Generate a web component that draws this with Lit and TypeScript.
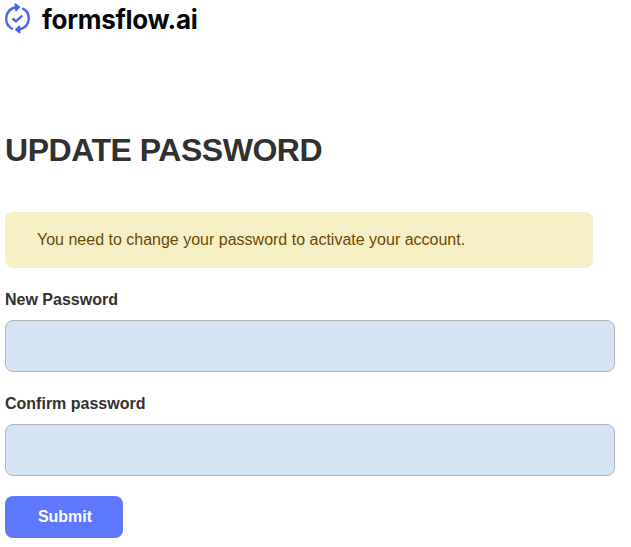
import { LitElement, html, css } from "lit";
import { customElement } from "lit/decorators.js";

@customElement("app-root")
export class AppRoot extends LitElement {
  static styles = css`
    :host {
      display: block;
      box-sizing: border-box;
      height: 547px;
      padding: 0 16px 0 5px;
      overflow: hidden;
      background: #fff;
      color: #313132;
      font: 16px/24px "Liberation Sans", Arial, sans-serif;
    }
    .brand {
      display: flex;
      height: 38px;
    }
    .mark {
      flex: none;
      width: 26px;
      height: 38px;
    }
    .name {
      margin-left: 11px;
      color: #050708;
      font: 700 26px/40px Inter, sans-serif;
      letter-spacing: -0.27px;
      white-space: nowrap;
    }
    h1 {
      margin: 92px 0 0;
      font-size: 32px;
      line-height: 40px;
      font-weight: 700;
      letter-spacing: -0.47px;
      white-space: nowrap;
    }
    .alert {
      box-sizing: border-box;
      width: 588px;
      height: 56px;
      margin-top: 42px;
      padding: 16px 32px;
      border-radius: 8px;
      background: #f7f0c6;
      color: #6c4a00;
    }
    form {
      margin: 0;
      padding-top: 20px;
    }
    label {
      display: block;
      height: 24px;
      font-weight: 700;
    }
    input {
      display: block;
      box-sizing: border-box;
      width: 610px;
      height: 52px;
      margin: 8px 0 20px;
      padding: 0 12px;
      border: 1px solid #b1b3b5;
      border-radius: 8px;
      outline: none;
      background: #d6e5f5;
      font: inherit;
    }
    button {
      display: block;
      width: 118px;
      height: 42px;
      margin: 0;
      padding: 0 0 0 2px;
      border: 0;
      border-radius: 8px;
      background: #5e77ff;
      color: #fff;
      font: 700 16px/42px "Liberation Sans", Arial, sans-serif;
    }
  `;

  render() {
    return html`
      <div class="brand">
        <svg class="mark" viewBox="5 0 26 38" fill="none" stroke="#4a64f5" stroke-width="2.4" stroke-linejoin="round">
          <path d="M13 29.1C8.6 27.4 6.2 23.2 6.2 18.5C6.2 12.5 10.6 7.8 16.5 7.3" />
          <path d="M15.4 4.2L19.2 7.2L16 10.4L15.8 7Z" fill="#4a64f5" stroke-width="1.8" />
          <path d="M22.2 8.4C26.4 10.1 28.8 14 28.8 18.5C28.8 24.3 24.7 28.8 19 29.5" />
          <path d="M19.2 26.4L16 29.6L19.6 32.6L19.3 29.5Z" fill="#4a64f5" stroke-width="1.8" />
          <path d="M12.6 18.5L15.9 21.4L22.2 15.6" />
        </svg>
        <span class="name">formsflow.ai</span>
      </div>
      <h1>UPDATE PASSWORD</h1>
      <div class="alert">You need to change your password to activate your account.</div>
      <form @submit=${(e: Event) => e.preventDefault()}>
        <label for="password-new">New Password</label>
        <input id="password-new" type="password" />
        <label for="password-confirm">Confirm password</label>
        <input id="password-confirm" type="password" />
        <button type="submit">Submit</button>
      </form>
    `;
  }
}
